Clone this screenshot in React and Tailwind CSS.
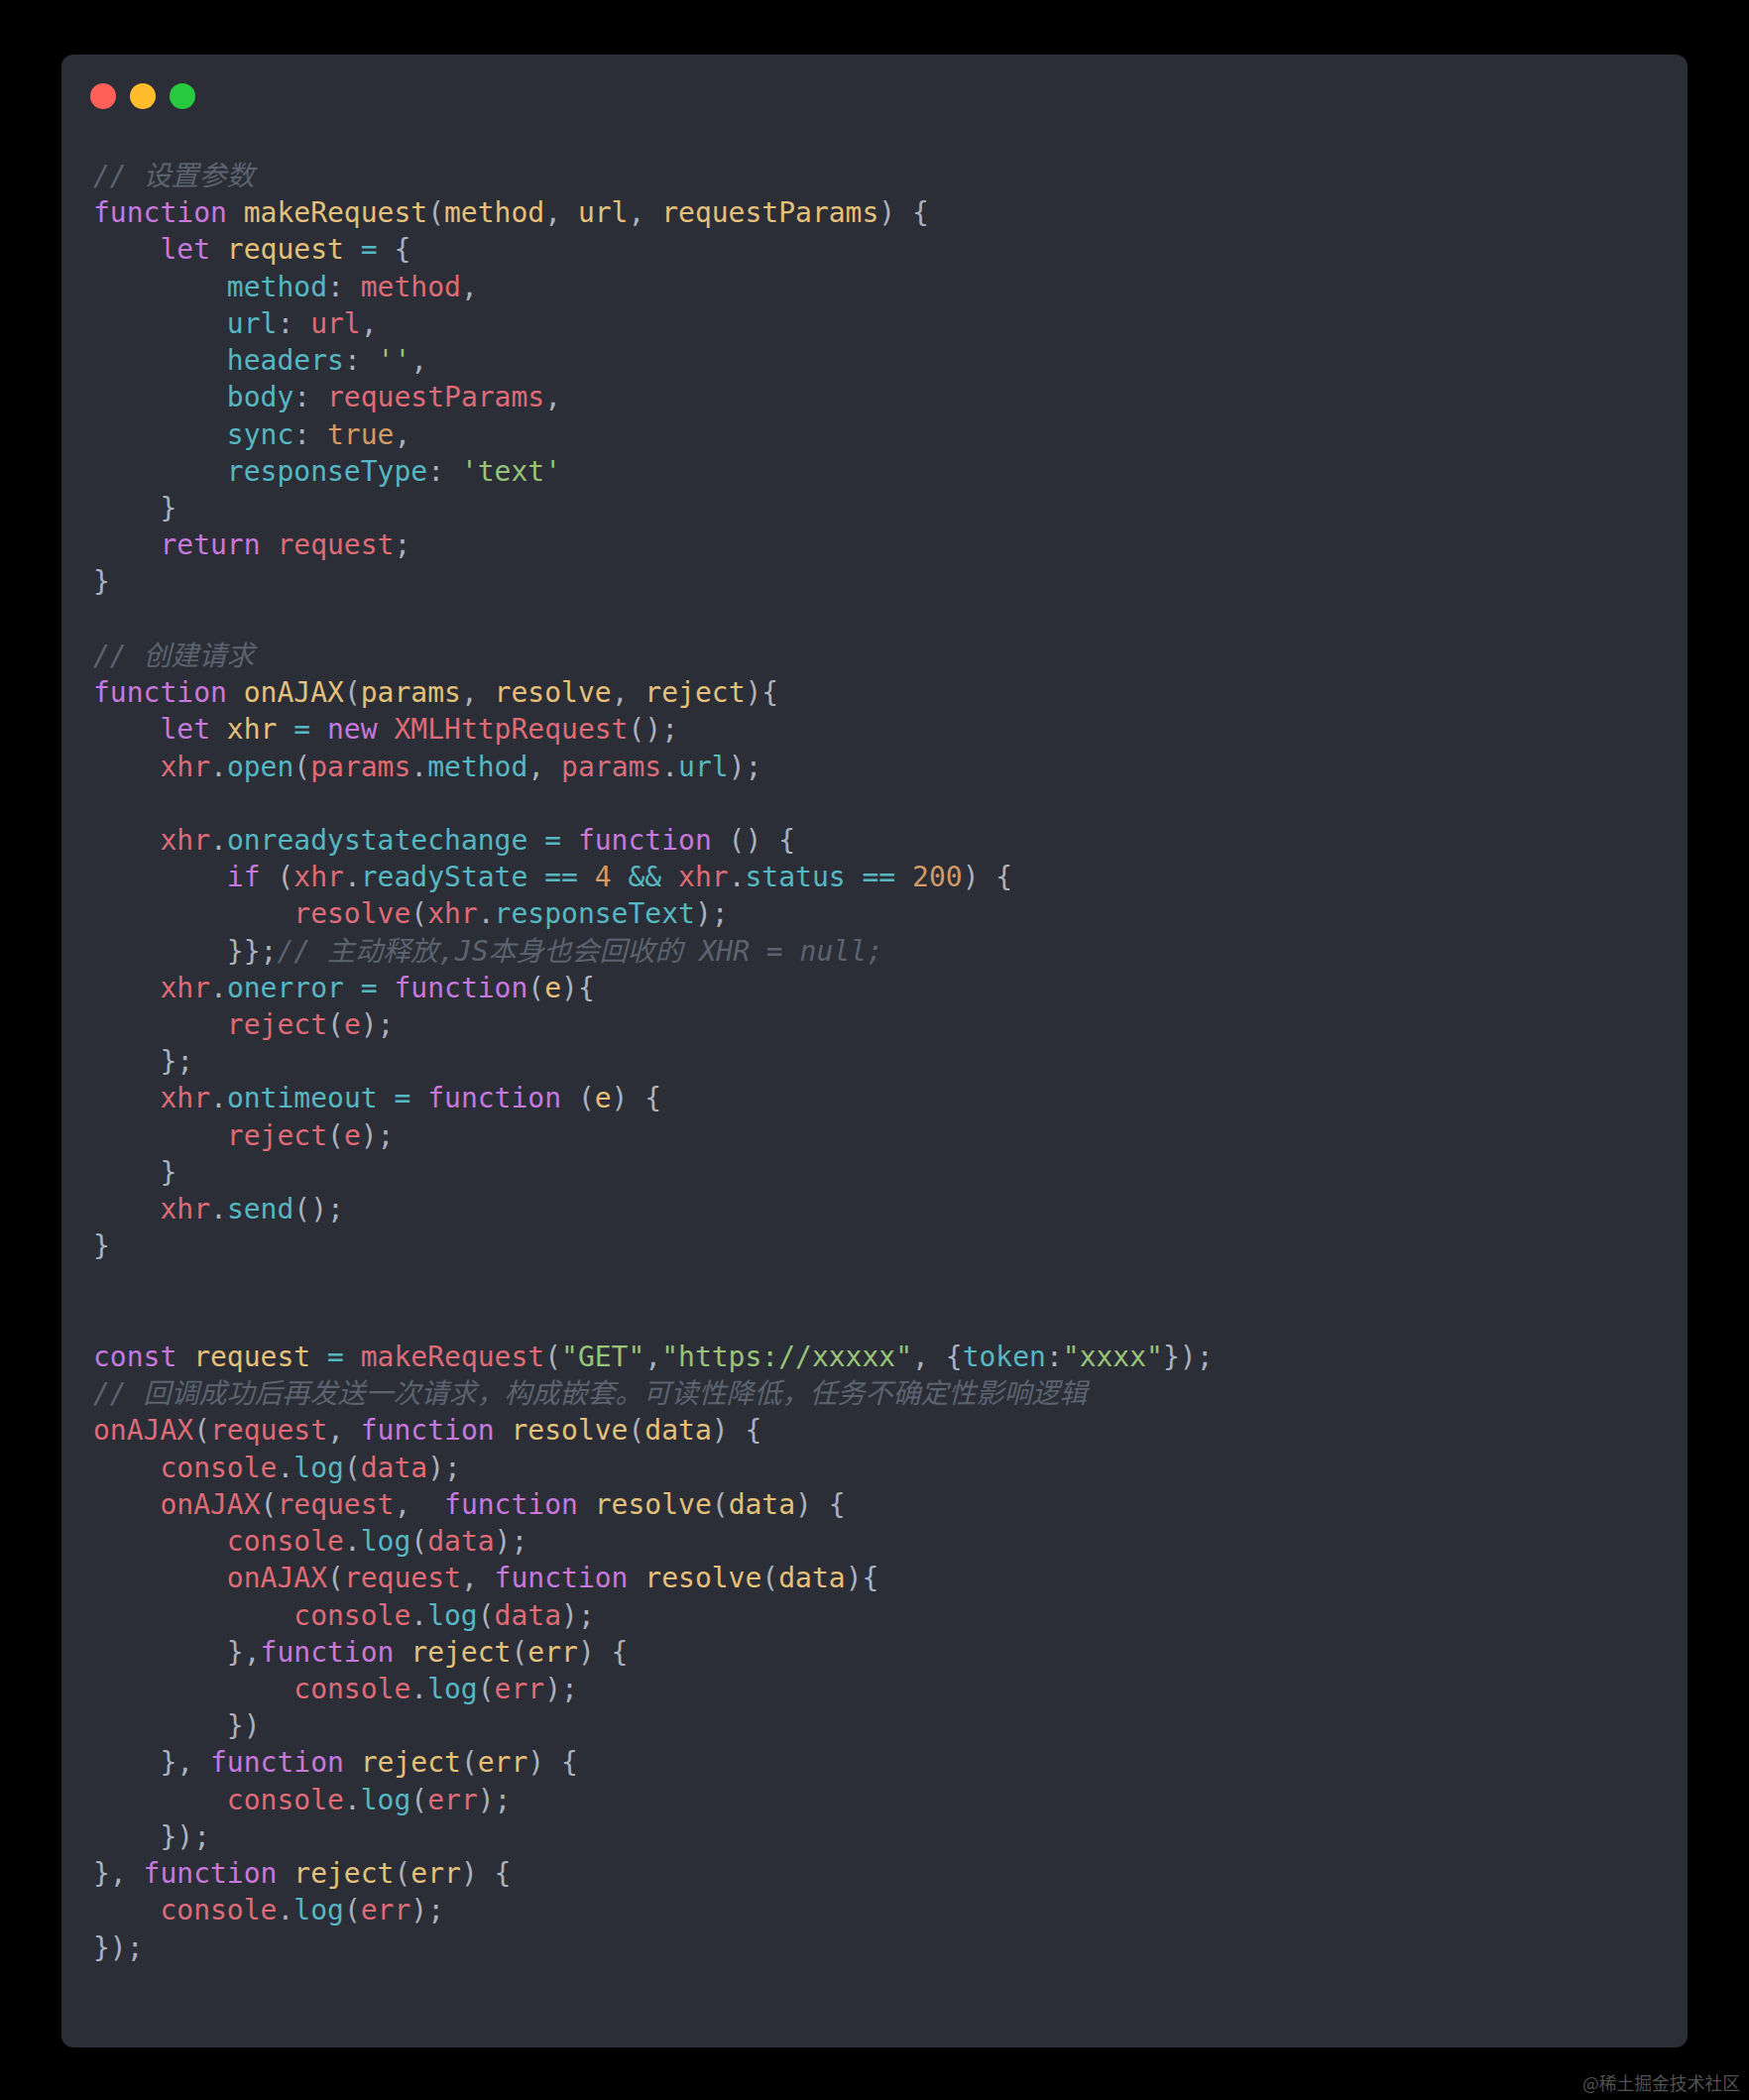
const P = 'text-[#c678dd]'
const Y = 'text-[#e5c07b]'
const R = 'text-[#de6b76]'
const C = 'text-[#56b6c2]'
const G = 'text-[#98c379]'
const O = 'text-[#d19a66]'
const W = 'text-[#abb2bf]'
const M = 'text-[#5c6370] italic'

// each line is a flat list: colour, text, colour, text...
const lines = [
  [M, '// 设置参数'],
  [P, 'function ', Y, 'makeRequest', W, '(', Y, 'method', W, ', ', Y, 'url', W, ', ', Y, 'requestParams', W, ') {'],
  [P, '    let ', Y, 'request ', C, '= ', W, '{'],
  [C, '        method', W, ': ', R, 'method', W, ','],
  [C, '        url', W, ': ', R, 'url', W, ','],
  [C, '        headers', W, ': ', G, "''", W, ','],
  [C, '        body', W, ': ', R, 'requestParams', W, ','],
  [C, '        sync', W, ': ', O, 'true', W, ','],
  [C, '        responseType', W, ': ', G, "'text'"],
  [W, '    }'],
  [P, '    return ', R, 'request', W, ';'],
  [W, '}'],
  [],
  [M, '// 创建请求'],
  [P, 'function ', Y, 'onAJAX', W, '(', Y, 'params', W, ', ', Y, 'resolve', W, ', ', Y, 'reject', W, '){'],
  [P, '    let ', Y, 'xhr ', C, '= ', P, 'new ', R, 'XMLHttpRequest', W, '();'],
  [R, '    xhr', W, '.', C, 'open', W, '(', R, 'params', W, '.', C, 'method', W, ', ', R, 'params', W, '.', C, 'url', W, ');'],
  [],
  [R, '    xhr', W, '.', C, 'onreadystatechange ', C, '= ', P, 'function ', W, '() {'],
  [P, '        if ', W, '(', R, 'xhr', W, '.', C, 'readyState ', C, '== ', O, '4 ', C, '&& ', R, 'xhr', W, '.', C, 'status ', C, '== ', O, '200', W, ') {'],
  [R, '            resolve', W, '(', R, 'xhr', W, '.', C, 'responseText', W, ');'],
  [W, '        }};', M, '// 主动释放,JS本身也会回收的 XHR = null;'],
  [R, '    xhr', W, '.', C, 'onerror ', C, '= ', P, 'function', W, '(', Y, 'e', W, '){'],
  [R, '        reject', W, '(', R, 'e', W, ');'],
  [W, '    };'],
  [R, '    xhr', W, '.', C, 'ontimeout ', C, '= ', P, 'function ', W, '(', Y, 'e', W, ') {'],
  [R, '        reject', W, '(', R, 'e', W, ');'],
  [W, '    }'],
  [R, '    xhr', W, '.', C, 'send', W, '();'],
  [W, '}'],
  [],
  [],
  [P, 'const ', Y, 'request ', C, '= ', R, 'makeRequest', W, '(', G, '"GET"', W, ',', G, '"https://xxxxx"', W, ', {', C, 'token', W, ':', G, '"xxxx"', W, '});'],
  [M, '// 回调成功后再发送一次请求，构成嵌套。可读性降低，任务不确定性影响逻辑'],
  [R, 'onAJAX', W, '(', R, 'request', W, ', ', P, 'function ', Y, 'resolve', W, '(', Y, 'data', W, ') {'],
  [R, '    console', W, '.', C, 'log', W, '(', R, 'data', W, ');'],
  [R, '    onAJAX', W, '(', R, 'request', W, ',  ', P, 'function ', Y, 'resolve', W, '(', Y, 'data', W, ') {'],
  [R, '        console', W, '.', C, 'log', W, '(', R, 'data', W, ');'],
  [R, '        onAJAX', W, '(', R, 'request', W, ', ', P, 'function ', Y, 'resolve', W, '(', Y, 'data', W, '){'],
  [R, '            console', W, '.', C, 'log', W, '(', R, 'data', W, ');'],
  [W, '        },', P, 'function ', Y, 'reject', W, '(', Y, 'err', W, ') {'],
  [R, '            console', W, '.', C, 'log', W, '(', R, 'err', W, ');'],
  [W, '        })'],
  [W, '    }, ', P, 'function ', Y, 'reject', W, '(', Y, 'err', W, ') {'],
  [R, '        console', W, '.', C, 'log', W, '(', R, 'err', W, ');'],
  [W, '    });'],
  [W, '}, ', P, 'function ', Y, 'reject', W, '(', Y, 'err', W, ') {'],
  [R, '    console', W, '.', C, 'log', W, '(', R, 'err', W, ');'],
  [W, '});'],
]

function CodeLine({ tokens }) {
  const spans = []
  for (let i = 0; i < tokens.length; i += 2) {
    spans.push(<span key={i} className={tokens[i]}>{tokens[i + 1]}</span>)
  }
  return <div className="h-[37.22px] whitespace-pre">{spans}</div>
}

export default function App() {
  return (
    <div className="relative w-[1764px] h-[2118px] bg-black overflow-hidden pt-[55px] pl-[62px]">
      <div className="w-[1640px] h-[2010px] rounded-[12px] bg-[#2b2e36] pt-[29px]">
        {/* Window dots */}
        <div className="flex gap-[14px] pl-[29px]">
          <div className="w-[26px] h-[26px] rounded-full bg-[#ff5f56]" />
          <div className="w-[26px] h-[26px] rounded-full bg-[#ffbd2e]" />
          <div className="w-[26px] h-[26px] rounded-full bg-[#27c93f]" />
        </div>

        {/* Code */}
        <div className="mt-[49px] pl-[32px] text-[28px] leading-[37.22px] font-['DejaVu_Sans_Mono','Noto_Sans_CJK_SC',monospace]">
          {lines.map((tokens, i) => (
            <CodeLine key={i} tokens={tokens} />
          ))}
        </div>
      </div>

      <div className="absolute right-[9px] bottom-[6px] text-[17.8px] leading-6 text-[#525252] font-['Noto_Sans_CJK_SC',serif]">
        @稀土掘金技术社区
      </div>
    </div>
  )
}
